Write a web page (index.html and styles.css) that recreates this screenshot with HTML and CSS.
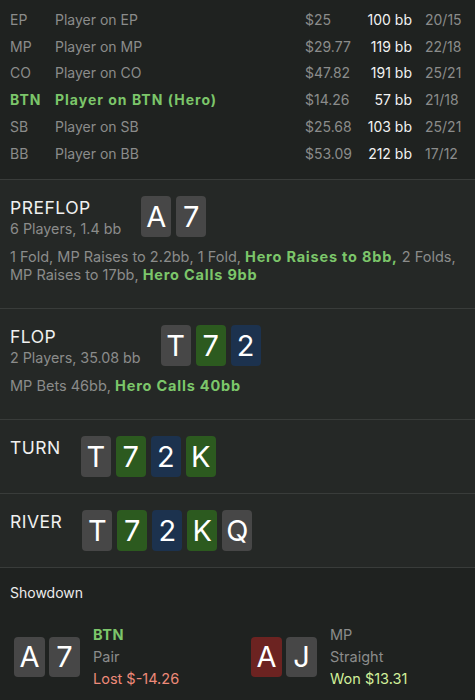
FILE: index.html
```html
<!DOCTYPE html>
<html lang="en">
<head>
    <meta charset="UTF-8">
    <meta name="viewport" content="width=device-width, initial-scale=1.0">
    <title>Hand Replay</title>
    <link rel="stylesheet" href="styles.css">
</head>
<body>
    <div class="players">
        <div class="player">
            <span class="pos">EP</span><span class="name">Player on EP</span><span class="stack">$25</span><span class="bb">100 bb</span><span class="stat">20/15</span>
        </div>
        <div class="player">
            <span class="pos">MP</span><span class="name">Player on MP</span><span class="stack">$29.77</span><span class="bb">119 bb</span><span class="stat">22/18</span>
        </div>
        <div class="player">
            <span class="pos">CO</span><span class="name">Player on CO</span><span class="stack">$47.82</span><span class="bb">191 bb</span><span class="stat">25/21</span>
        </div>
        <div class="player hero">
            <span class="pos">BTN</span><span class="name">Player on BTN (Hero)</span><span class="stack">$14.26</span><span class="bb">57 bb</span><span class="stat">21/18</span>
        </div>
        <div class="player">
            <span class="pos">SB</span><span class="name">Player on SB</span><span class="stack">$25.68</span><span class="bb">103 bb</span><span class="stat">25/21</span>
        </div>
        <div class="player">
            <span class="pos">BB</span><span class="name">Player on BB</span><span class="stack">$53.09</span><span class="bb">212 bb</span><span class="stat">17/12</span>
        </div>
    </div>

    <section class="street">
        <div class="street-head">
            <div class="street-title">
                <h2>PREFLOP</h2>
                <div class="sub">6 Players, 1.4 bb</div>
            </div>
            <div class="cards">
                <div class="card">A</div>
                <div class="card">7</div>
            </div>
        </div>
        <p class="actions">1 Fold, MP Raises to 2.2bb, 1 Fold, <b>Hero Raises to 8bb,</b> 2 Folds, MP Raises to 17bb, <b>Hero Calls 9bb</b></p>
    </section>

    <section class="street">
        <div class="street-head">
            <div class="street-title">
                <h2>FLOP</h2>
                <div class="sub">2 Players, 35.08 bb</div>
            </div>
            <div class="cards">
                <div class="card">T</div>
                <div class="card green">7</div>
                <div class="card blue">2</div>
            </div>
        </div>
        <p class="actions">MP Bets 46bb, <b>Hero Calls 40bb</b></p>
    </section>

    <section class="street short">
        <div class="street-head">
            <div class="street-title">
                <h2>TURN</h2>
            </div>
            <div class="cards">
                <div class="card">T</div>
                <div class="card green">7</div>
                <div class="card blue">2</div>
                <div class="card green">K</div>
            </div>
        </div>
    </section>

    <section class="street short">
        <div class="street-head">
            <div class="street-title">
                <h2>RIVER</h2>
            </div>
            <div class="cards">
                <div class="card">T</div>
                <div class="card green">7</div>
                <div class="card blue">2</div>
                <div class="card green">K</div>
                <div class="card">Q</div>
            </div>
        </div>
    </section>

    <section class="showdown">
        <h3>Showdown</h3>
        <div class="hands">
            <div class="hand">
                <div class="cards">
                    <div class="card">A</div>
                    <div class="card">7</div>
                </div>
                <div class="hand-info">
                    <div class="hero-name">BTN</div>
                    <div>Pair</div>
                    <div class="lost">Lost $-14.26</div>
                </div>
            </div>
            <div class="hand">
                <div class="cards">
                    <div class="card red">A</div>
                    <div class="card">J</div>
                </div>
                <div class="hand-info">
                    <div>MP</div>
                    <div>Straight</div>
                    <div class="won">Won $13.31</div>
                </div>
            </div>
        </div>
    </section>
</body>
</html>
```

FILE: styles.css
```css
body {
    margin: 0;
    background: #1f2220;
    color: #8b8c8b;
    font-family: 'Inter', 'Liberation Sans', sans-serif;
    font-size: 14px;
}
b {
    color: #7cc66a;
    font-weight: 700;
    letter-spacing: 0.8px;
}
.players {
    padding: 6px 10px 12px 10px;
    border-bottom: 1px solid #393c3a;
}
.player {
    display: grid;
    grid-template-columns: 45px 1fr 58px 49px 53px;
    height: 26.75px;
    align-items: center;
}
.player .bb {
    color: #f2f2f2;
    text-align: right;
}
.player .stat {
    padding-left: 13px;
}
.player.hero .pos,
.player.hero .name {
    color: #7cc66a;
    font-weight: 700;
    letter-spacing: 1px;
}
.street {
    background: #252826;
    padding: 16px 10px 24px 10px;
    border-bottom: 1px solid #393c3a;
}
.street.short {
    padding-bottom: 16px;
}
.street-head {
    display: flex;
    align-items: flex-start;
    gap: 20px;
}
.street-title h2 {
    margin: 0;
    font-size: 17.5px;
    font-weight: 400;
    line-height: 22px;
    letter-spacing: 0.5px;
    color: #f0f0f0;
    padding-top: 1px;
}
.street-title .sub {
    font-size: 14.3px;
    line-height: 19px;
}
.cards {
    display: flex;
    gap: 5px;
}
.card {
    width: 30px;
    height: 41px;
    border-radius: 4px;
    background: #474747;
    color: #ffffff;
    font-size: 29px;
    display: flex;
    align-items: center;
    justify-content: center;
}
.card.green {
    background: #2c5a1f;
}
.card.blue {
    background: #1c324e;
}
.card.red {
    background: #6c2321;
}
.actions {
    margin: 10px 0 0 0;
    font-size: 14.5px;
    line-height: 18px;
}
.showdown {
    padding: 16px 10px 0 10px;
}
.showdown h3 {
    margin: 0;
    font-size: 14px;
    font-weight: 400;
    line-height: 18px;
    color: #ececec;
}
.hands {
    display: grid;
    grid-template-columns: 237px 1fr;
    padding: 22px 0 0 4px;
}
.hand {
    display: flex;
    align-items: center;
    gap: 13px;
}
.hand .cards {
    gap: 4px;
}
.hand .card {
    width: 31px;
    height: 40px;
}
.hand-info {
    font-size: 14.5px;
    line-height: 22px;
}
.hand-info .hero-name {
    color: #7cc66a;
    font-weight: 700;
    letter-spacing: 0.5px;
}
.lost {
    color: #ee8a79;
}
.won {
    color: #d2f09a;
}
```
